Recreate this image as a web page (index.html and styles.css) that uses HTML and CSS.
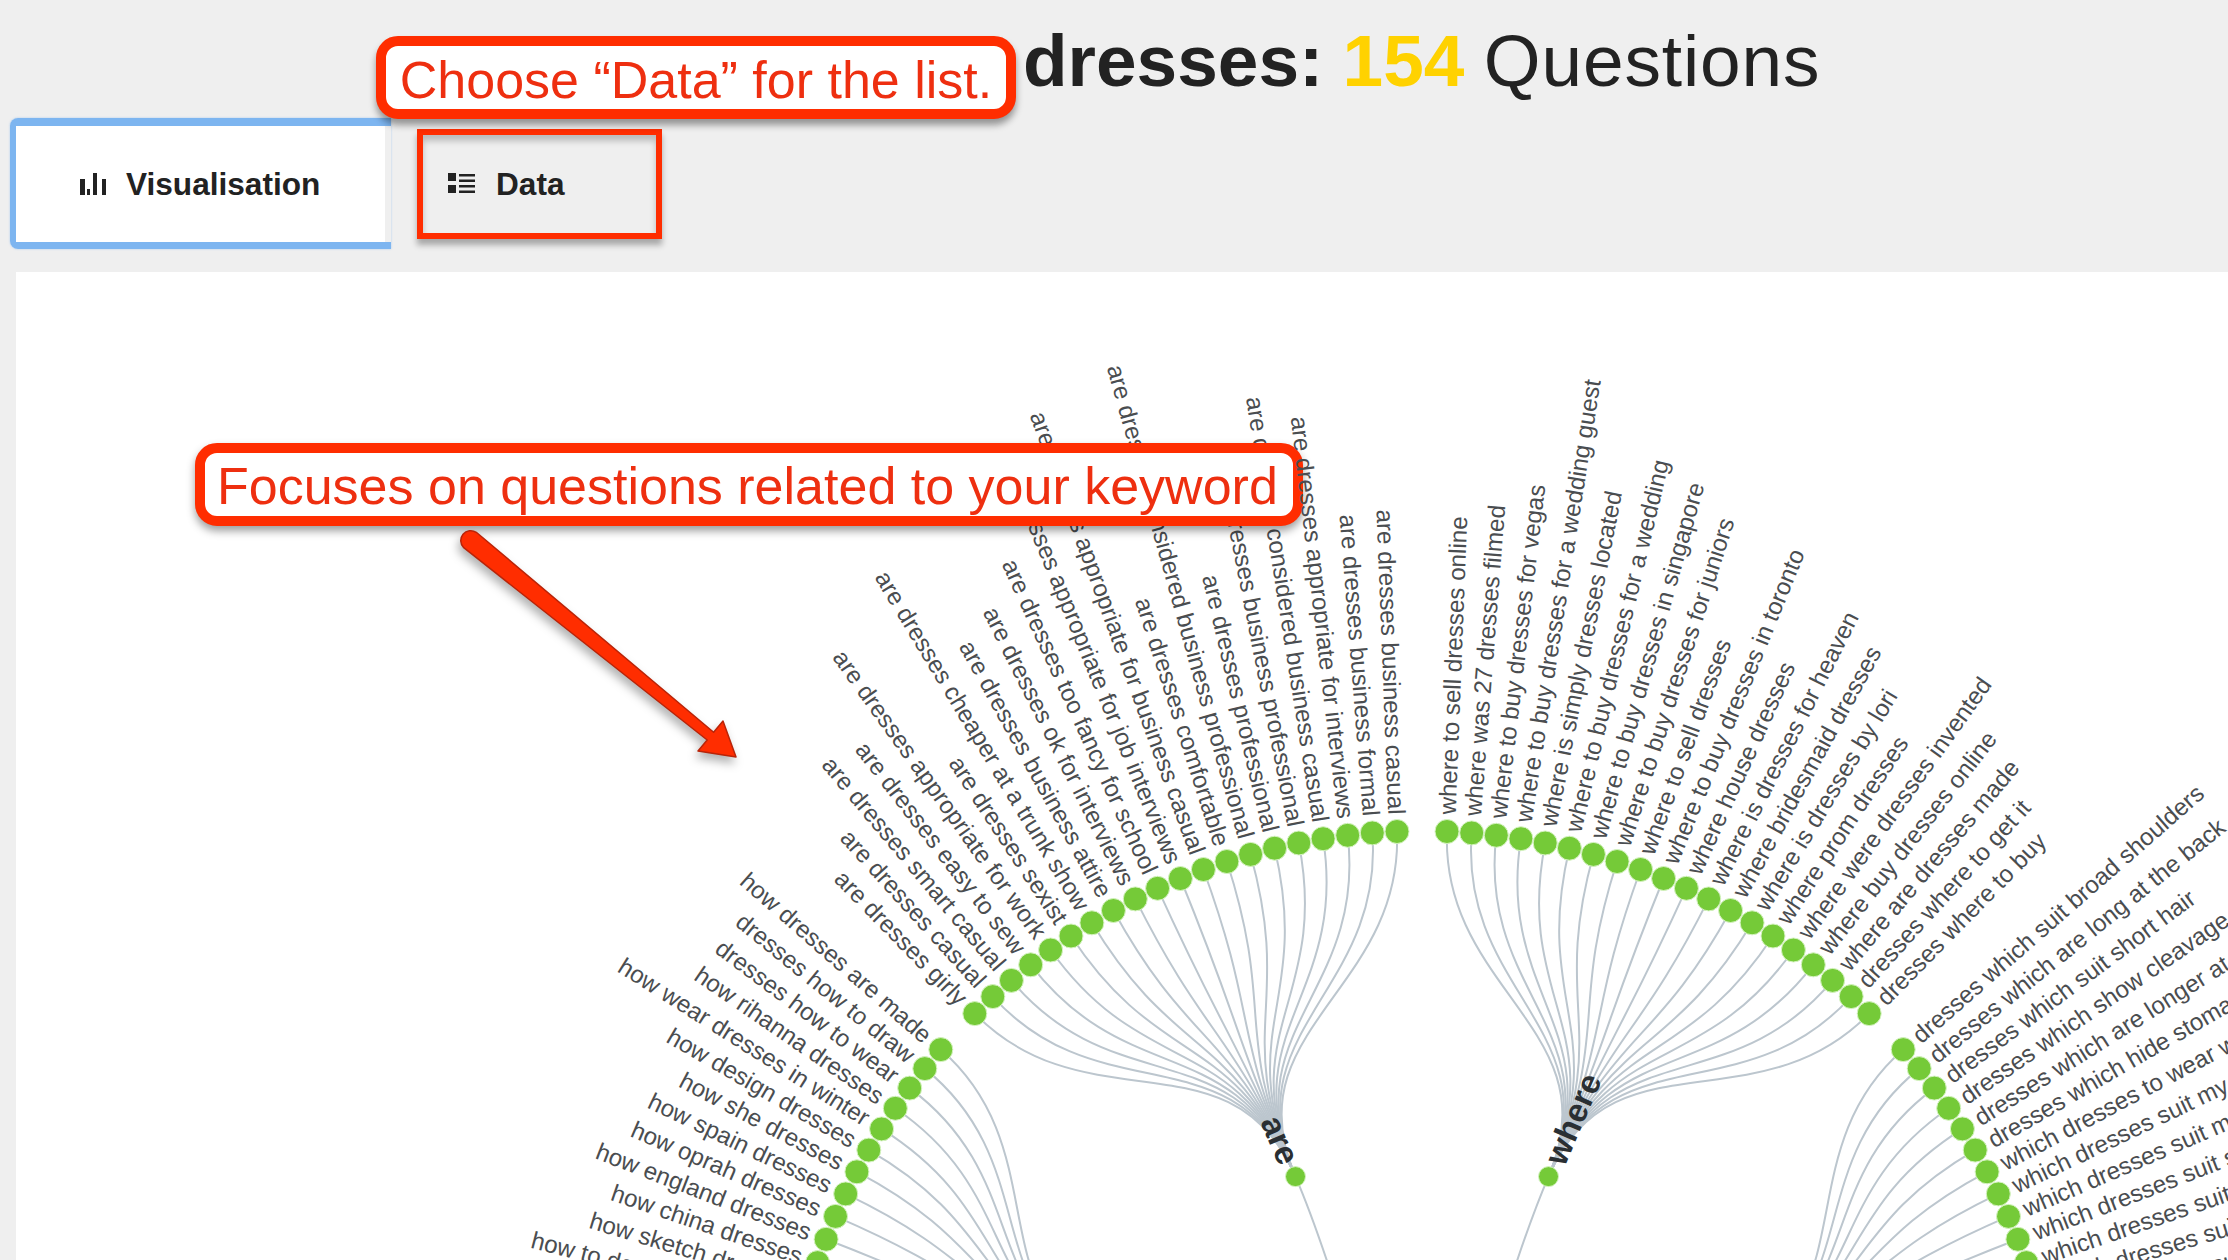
FILE: index.html
```html
<!DOCTYPE html>
<html lang="en">
<head>
<meta charset="utf-8">
<title>dresses: 154 Questions</title>
<link rel="stylesheet" href="styles.css">
</head>
<body>
<header class="title-row">
  <h1 class="title"><b>dresses:</b> <b class="count">154</b> <span class="rest">Questions</span></h1>
</header>
<nav class="tabs">
  <a class="tab tab-active">
    <span class="tab-face">
      <svg class="icon" width="27" height="23" viewBox="0 0 27 23"><path d="M0 6h5v16H0zM7 16h3v6H7zM13 0h4v22h-4zM22 6h4v16h-4z"/></svg>
      <span>Visualisation</span>
    </span>
  </a>
  <a class="tab tab-data">
    <svg class="icon" width="27" height="21" viewBox="0 0 27 21"><path d="M0 0h8v8H0zM0 12h8v8H0zM11 1h16v2.500H11zM11 6.500h16V9H11zM11 12h16v2.500H11zM11 17.500h16V20H11z"/></svg>
    <span>Data</span>
  </a>
</nav>
<div class="callout callout-data">Choose “Data” for the list.</div>
<main class="panel">
  <svg class="chart" width="2212" height="988" viewBox="16 272 2212 988">
    <g id="links" class="links"></g>
    <g id="labels" class="labels"></g>
    <g id="nodes" class="nodes"></g>
    <g class="note">
      <rect class="note-box" x="200" y="448" width="1098" height="73" rx="17"/>
      <text class="note-text" x="217" y="504">Focuses on questions related to your keyword</text>
    </g>
    <path class="arrow" d="M476.300 532.300L713.600 732.200L723 721L736 757L698 751L707.200 740L463.700 547.700A10 10 0 0 1 476.300 532.300Z"/>
    <g id="labels-over" class="labels"></g>
  </svg>
</main>
<script src="script.js"></script>
</body>
</html>
```
FILE: styles.css
```css
* { box-sizing: border-box; }
html, body { margin: 0; height: 100%; }
body {
  position: relative;
  width: 2228px;
  height: 1260px;
  overflow: hidden;
  background: #efefef;
  color: #222;
  font-family: "Liberation Sans", Arial, sans-serif;
}
.title-row { height: 118px; padding: 19px 0 0 1023px; }
.title { margin: 0; font-size: 73px; line-height: 84px; font-weight: 400; white-space: nowrap; }
.title b { font-weight: 700; }
.count { color: #ffd200; margin-left: -1px; }
.rest { letter-spacing: .9px; margin-left: -1px; }

.tabs { display: flex; align-items: center; height: 131px; padding-left: 10px; gap: 26px; }
.tab { display: flex; align-items: center; font-size: 31.6px; font-weight: 700; color: #222; }
.tab .icon { fill: #222; flex: none; }
.tab-data span { padding-top: 2px; }
.tab-active {
  width: 381px; height: 131px;
  border: solid #7db5f0; border-width: 8px 0 7px 6px;
  border-radius: 8px 0 0 8px;
  padding-right: 6px;
  box-shadow: 0 0 2px rgba(125, 181, 240, .7);
}
.tab-face { display: flex; align-items: center; gap: 19px; flex: 1; height: 100%; padding: 0 0 0 64px; background: #fff; }
.tab-data {
  width: 245px; height: 110px; gap: 21px; padding-left: 25px;
  border: 6px solid #ff2d00;
  box-shadow: 0 6px 6px rgba(0, 0, 0, .3), inset 0 6px 6px rgba(0, 0, 0, .22);
}
.callout {
  position: absolute; left: 376px; top: 36px; width: 640px; height: 83px;
  display: flex; align-items: center; justify-content: center;
  padding-top: 5px;
  border: 10px solid #ff2d00; border-radius: 22px; background: #fff;
  color: #ee2f10; font-size: 52px; white-space: nowrap;
  box-shadow: 0 6px 7px rgba(0, 0, 0, .38);
}
.panel { margin: 23px 0 0 16px; height: 988px; background: #fff; overflow: hidden; }
.chart { display: block; }
.links path { fill: none; stroke: #bcc6ce; stroke-width: 2; }
.nodes circle { fill: #75ca38; stroke: #d6f3c2; stroke-width: 1; }
.labels text { font-size: 24.2px; fill: #4a4d50; }
.labels text.inner { font-size: 33px; font-weight: 700; fill: #2a2f33; }
.note { filter: drop-shadow(0 5px 4px rgba(0, 0, 0, .38)); }
.note-box { fill: #fff; stroke: #ff2d00; stroke-width: 10; }
.note-text { font-size: 52px; fill: #ee2f10; }
.arrow { fill: #ff2d00; stroke: #b92408; stroke-width: 1.5; stroke-linejoin: round; filter: drop-shadow(-2px 6px 5px rgba(0, 0, 0, .3)); }
```
FILE: script.js
```js
const SVG_NS = "http://www.w3.org/2000/svg";
const CX = 1422, CY = 1470, R = 639, R_INNER = 319.5, STEP = 2.22, LEAF_R = 12, INNER_R = 10;
const LEAVES_PER_GROUP = 20;

const groups = [
  { name: "are", start: -2.24, dir: -1, labels: [
    "are dresses business casual", "are dresses business formal", "are dresses appropriate for interviews",
    "are dresses considered business casual", "are dresses business professional", "are dresses professional",
    "are dresses considered business professional", "are dresses comfortable", "are dresses appropriate for business casual",
    "are dresses appropriate for job interviews", "are dresses too fancy for school", "are dresses ok for interviews",
    "are dresses business attire", "are dresses cheaper at a trunk show", "are dresses sexist",
    "are dresses appropriate for work", "are dresses easy to sew", "are dresses smart casual",
    "are dresses casual", "are dresses girly"] },
  { name: "where", start: 2.24, dir: 1, labels: [
    "where to sell dresses online", "where was 27 dresses filmed", "where to buy dresses for vegas",
    "where to buy dresses for a wedding guest", "where is simply dresses located", "where to buy dresses for a wedding",
    "where to buy dresses in singapore", "where to buy dresses for juniors", "where to sell dresses",
    "where to buy dresses in toronto", "where house dresses", "where is dresses for heaven",
    "where bridesmaid dresses", "where is dresses by lori", "where prom dresses",
    "where were dresses invented", "where buy dresses online", "where are dresses made",
    "dresses where to get it", "dresses where to buy"] },
  { name: "which", start: 48.86, dir: 1, labels: [
    "dresses which suit broad shoulders", "dresses which are long at the back", "dresses which suit short hair",
    "dresses which show cleavage", "dresses which are longer at the back", "dresses which hide stomach",
    "which dresses to wear with boots", "which dresses suit my body shape", "which dresses suit me",
    "which dresses suit short girls", "which dresses suit tall girls", "which dresses suit pear shape",
    "which dresses suit apple shape", "which dresses suit petite"] },
  { name: "how", start: -48.86, dir: -1, labels: [
    "how dresses are made", "dresses how to draw", "dresses how to wear", "how rihanna dresses",
    "how wear dresses in winter", "how design dresses", "how she dresses", "how spain dresses",
    "how oprah dresses", "how england dresses", "how china dresses", "how sketch dresses",
    "how to decorate dresses", "how to style dresses"] }
];

const polar = (deg, r) => {
  const a = deg * Math.PI / 180;
  return [CX + r * Math.sin(a), CY - r * Math.cos(a)];
};
const pt = p => p[0].toFixed(1) + " " + p[1].toFixed(1);
const radialLink = (a0, r0, a1, r1) => {
  const m = (r0 + r1) / 2;
  return "M" + pt(polar(a0, r0)) + "C" + pt(polar(a0, m)) + " " + pt(polar(a1, m)) + " " + pt(polar(a1, r1));
};
const make = (parent, tag, attrs, text) => {
  const el = document.createElementNS(SVG_NS, tag);
  Object.keys(attrs).forEach(k => el.setAttribute(k, attrs[k]));
  if (text) el.textContent = text;
  parent.appendChild(el);
  return el;
};

const links = document.getElementById("links");
const nodes = document.getElementById("nodes");
const labels = document.getElementById("labels");
const over = document.getElementById("labels-over");

function addLabel(parent, text, deg, r, offset, cls) {
  const [x, y] = polar(deg, r);
  const right = deg > 0;
  const attrs = {
    x: right ? offset : -offset,
    dy: ".33em",
    "text-anchor": right ? "start" : "end",
    transform: "translate(" + x.toFixed(1) + " " + y.toFixed(1) + ") rotate(" + (right ? deg - 90 : deg + 90).toFixed(2) + ")"
  };
  if (cls) attrs.class = cls;
  make(parent, "text", attrs, text);
}

groups.forEach(g => {
  const mid = g.start + g.dir * STEP * (LEAVES_PER_GROUP - 1) / 2;
  make(links, "path", { d: radialLink(180, 0, mid, R_INNER) });
  g.labels.forEach((label, i) => {
    const deg = g.start + g.dir * STEP * i;
    make(links, "path", { d: radialLink(mid, R_INNER, deg, R) });
    const [x, y] = polar(deg, R);
    make(nodes, "circle", { cx: x.toFixed(1), cy: y.toFixed(1), r: LEAF_R });
    addLabel(label === "are dresses appropriate for interviews" ? over : labels, label, deg, R, 17);
  });
  const [x, y] = polar(mid, R_INNER);
  make(nodes, "circle", { cx: x.toFixed(1), cy: y.toFixed(1), r: INNER_R });
  addLabel(labels, g.name, mid, R_INNER, 15, "inner");
});
```
